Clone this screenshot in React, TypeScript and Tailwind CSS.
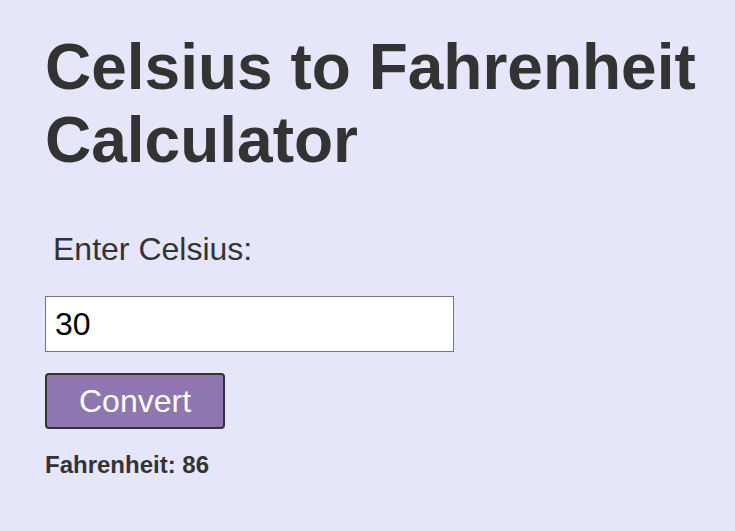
import React from "react";

export default function App() {
  return (
    <div className="min-h-[531px] w-full bg-[#e6e6fa] text-[#333] pl-[45px] py-[1px]" style={{ fontFamily: '"Liberation Sans", Arial, sans-serif' }}>
      <h1 className="mt-[30px] w-[670px] text-[64px] leading-[73px] font-bold">Celsius to Fahrenheit Calculator</h1>
      <label className="block mt-[54px] text-[32px] leading-[37px] pl-[8px]">Enter Celsius:</label>
      <input
        type="text"
        defaultValue="30"
        className="block mt-[28px] w-[409px] h-[56px] bg-white border border-[#767676] px-[9px] text-[32px] text-black outline-none"
      />
      <button className="block mt-[21px] w-[180px] h-[56px] bg-[#8e76b0] border-2 border-[#333] rounded-[4px] text-white text-[32px]">
        Convert
      </button>
      <p className="mt-[22px] text-[24px] leading-[28px] font-bold">Fahrenheit: 86</p>
    </div>
  );
}
